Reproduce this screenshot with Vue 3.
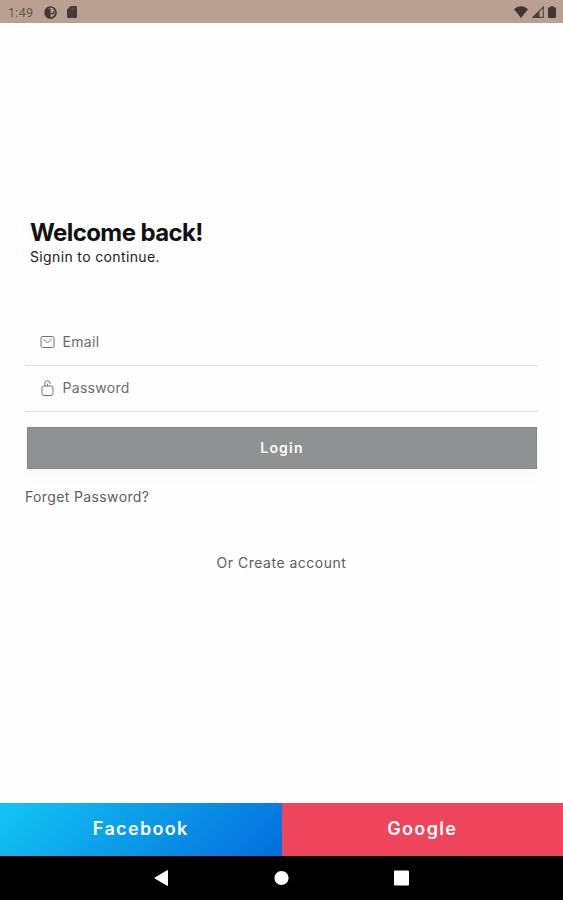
<script setup>
import { ref } from 'vue';

const email = ref('');
const password = ref('');
</script>

<template>
  <div class="screen">
    <header class="status-bar">
      <span class="clock">1:49</span>
      <svg class="status-app" width="13" height="13" viewBox="0 0 13 13">
        <circle cx="6.5" cy="6.5" r="5.5" fill="none" stroke="#42372f" stroke-width="1.6" />
        <path d="M2 2.5h4.6v8.8H4.4L2 9z" fill="#42372f" />
        <path d="M6.6 7.6h3.2V4.4" fill="none" stroke="#42372f" stroke-width="1.3" />
      </svg>
      <svg class="status-card" width="10" height="12" viewBox="0 0 10 12">
        <path d="M3.5 0H9a1 1 0 0 1 1 1v10a1 1 0 0 1-1 1H1a1 1 0 0 1-1-1V3.5z" fill="#463a35" />
        <path d="M3.5 1.7v2M5.5 1.7v2M7.5 1.7v2" stroke="#6b5b52" stroke-width=".8" />
      </svg>
      <div class="status-right">
        <svg width="14" height="12" viewBox="0 0 14 12">
          <path d="M0 3.2C4-.7 10-.7 14 3.2L7 12z" fill="#42372f" />
        </svg>
        <svg width="12" height="12" viewBox="0 0 12 12">
          <path d="M11.3 1v10.3H1z" fill="none" stroke="#5a4a41" stroke-width="1.2" />
          <path d="M7.5 4.5V12H0z" fill="#4b3e36" />
        </svg>
        <svg width="8" height="12" viewBox="0 0 8 12">
          <path d="M2.5 0h3v1.2H7a1 1 0 0 1 1 1V11a1 1 0 0 1-1 1H1a1 1 0 0 1-1-1V2.2a1 1 0 0 1 1-1h1.5z" fill="#42372f" />
        </svg>
      </div>
    </header>

    <main class="content">
      <div class="intro">
        <h1 class="title">Welcome back!</h1>
        <p class="subtitle">Signin to continue.</p>
      </div>

      <form class="form" @submit.prevent>
        <label class="field">
          <svg class="field-icon" width="15" height="16" viewBox="0 0 15 16">
            <rect x="1" y="2.5" width="13" height="11" rx="1.5" />
            <path d="M3.5 5l4 4 4-4" />
          </svg>
          <input v-model="email" type="email" placeholder="Email" />
        </label>
        <label class="field">
          <svg class="field-icon" width="15" height="16" viewBox="0 0 15 16">
            <rect x="2" y="6" width="11" height="9.5" rx="2" />
            <path d="M4.8 6V3.4a2.7 2.7 0 0 1 5.4 0V4M7.5 3.6V6" />
          </svg>
          <input v-model="password" type="password" placeholder="Password" />
        </label>
        <button class="login" type="submit">Login</button>
      </form>

      <a class="forgot">Forget Password?</a>
      <a class="create">Or Create account</a>
    </main>

    <div class="social">
      <button class="facebook">Facebook</button>
      <button class="google">Google</button>
    </div>

    <nav class="nav-bar">
      <svg width="15" height="18" viewBox="0 0 15 18">
        <path d="M13.5 1.5v15L.8 9z" fill="#fff" stroke="#fff" stroke-linejoin="round" />
      </svg>
      <svg width="15" height="18" viewBox="0 0 15 18">
        <circle cx="7.5" cy="9" r="7.1" fill="#fff" />
      </svg>
      <svg width="15" height="18" viewBox="0 0 15 18">
        <rect y="1.5" width="15" height="15" rx="1" fill="#fff" />
      </svg>
    </nav>
  </div>
</template>

<style>
body {
  margin: 0;
  background: #fff;
}
</style>

<style scoped>
.screen {
  display: flex;
  flex-direction: column;
  height: 900px;
  overflow: hidden;
  background: #fefefe;
  font-family: Inter, "Liberation Sans", sans-serif;
}

.status-bar {
  display: flex;
  align-items: center;
  flex-shrink: 0;
  box-sizing: border-box;
  height: 23px;
  padding: 1px 7px 0 8px;
  background: #b9a092;
}

.clock {
  width: 36px;
  font-family: Roboto, sans-serif;
  font-size: 12.5px;
  letter-spacing: 0.3px;
  color: #66564c;
}

.status-card {
  margin-left: 10px;
}

.status-right {
  display: flex;
  gap: 4px;
  margin-left: auto;
}

.content {
  display: flex;
  flex: 1;
  flex-direction: column;
  padding: 196px 25px 0;
}

.intro {
  padding-left: 5px;
}

.title {
  margin: 0;
  font-size: 24px;
  font-weight: 700;
  line-height: 28px;
  letter-spacing: -0.6px;
  color: #111;
}

.subtitle {
  margin: 0;
  font-size: 14px;
  line-height: 20px;
  letter-spacing: 0.36px;
  color: #222;
}

.form {
  display: flex;
  flex-direction: column;
  margin-top: 53px;
}

.field {
  display: flex;
  align-items: center;
  box-sizing: border-box;
  height: 46px;
  padding: 0 0 1px 15px;
  border-bottom: 1px solid #dfdfdf;
}

.field-icon {
  flex-shrink: 0;
  margin-right: 7.5px;
  fill: none;
  stroke: #747474;
  stroke-width: 1;
}

.field input {
  flex: 1;
  min-width: 0;
  padding: 0 0 1px;
  border: 0;
  outline: none;
  background: transparent;
  font: inherit;
  font-size: 14px;
  letter-spacing: 0.3px;
  color: #333;
}

.field input::placeholder {
  color: #6c6c6c;
  opacity: 1;
}

.login {
  height: 42px;
  margin: 15px 1px 0 2px;
  padding: 0 0 2px;
  border: 1px solid #858687;
  background: #909192;
  box-shadow: 0 8px 14px rgba(0, 0, 0, 0.03);
  font: inherit;
  font-size: 14px;
  font-weight: 600;
  letter-spacing: 1.2px;
  color: #fff;
}

.forgot {
  margin-top: 18px;
  font-size: 14px;
  line-height: 20px;
  letter-spacing: 0.37px;
  color: #5b5f62;
}

.create {
  align-self: center;
  margin-top: 46px;
  font-size: 14px;
  line-height: 20px;
  letter-spacing: 0.5px;
  color: #5b5f62;
}

.social {
  display: flex;
  flex-shrink: 0;
  height: 53px;
}

.social button {
  flex: 1;
  padding: 0 0 2px;
  border: 0;
  font: inherit;
  font-size: 18px;
  font-weight: 600;
  letter-spacing: 1.35px;
  color: #fff;
}

.social .facebook {
  background: linear-gradient(135deg, #12c6f3, #046ddd);
}

.social .google {
  background: #ee455c;
}

.nav-bar {
  display: flex;
  align-items: center;
  justify-content: center;
  flex-shrink: 0;
  gap: 105px;
  height: 44px;
  background: #000;
}
</style>
